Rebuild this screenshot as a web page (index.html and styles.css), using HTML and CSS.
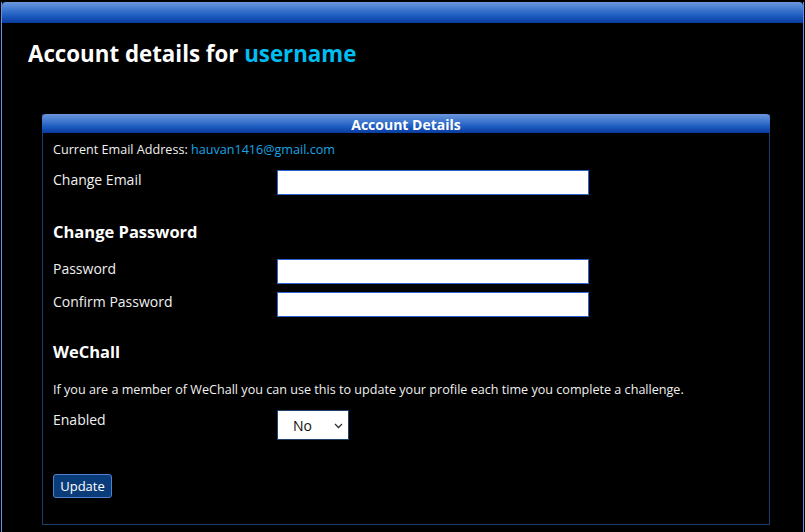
FILE: index.html
```html
<!DOCTYPE html>
<html lang="en">
<head>
<meta charset="utf-8">
<title>Account details</title>
<link rel="stylesheet" href="styles.css">
</head>
<body>
<div class="page">
  <div class="topbar"></div>
  <h1 class="title">Account details for <span class="user">username</span></h1>
  <form class="panel">
    <div class="panel-head">Account Details</div>
    <div class="panel-body">
      <p class="current">Current Email Address: <a class="email" href="#">hauvan1416@gmail.com</a></p>
      <div class="row row-email">
        <label class="label">Change Email</label>
        <input class="field" type="text">
      </div>
      <h2 class="section">Change Password</h2>
      <div class="row">
        <label class="label">Password</label>
        <input class="field" type="password">
      </div>
      <div class="row row-confirm">
        <label class="label">Confirm Password</label>
        <input class="field" type="password">
      </div>
      <h2 class="section section-wechall">WeChall</h2>
      <p class="note">If you are a member of WeChall you can use this to update your profile each time you complete a challenge.</p>
      <div class="row row-enabled">
        <label class="label">Enabled</label>
        <div class="select-wrap">
          <select class="select"><option>No</option><option>Yes</option></select>
          <svg class="chev" width="9" height="6" viewBox="0 0 9 6"><path d="M1 1 L4.5 4.5 L8 1" fill="none" stroke="#333" stroke-width="1.3"/></svg>
        </div>
      </div>
      <button class="btn" type="button">Update</button>
    </div>
  </form>
</div>
</body>
</html>
```
FILE: styles.css
```css
html, body {
  margin: 0;
  padding: 0;
  background: #000;
}
body {
  font-family: "Open Sans", "Noto Sans", sans-serif;
  color: #f0f0f0;
  background: #000;
}
.page {
  margin: 2px 1px 0 1px;
  border-left: 1px solid #6a90d8;
  border-right: 1px solid #6a90d8;
  min-height: 540px;
  box-sizing: border-box;
}
.topbar {
  height: 21px;
  border-radius: 4px 4px 0 0;
  background: linear-gradient(#6c98de 0%, #3a73cc 40%, #1a58be 70%, #0a3a9e 100%);
}
.title {
  margin: 16px 0 0 26px;
  font-size: 22.3px;
  font-weight: 700;
  line-height: 30px;
  color: #fff;
}
.user {
  color: #00bdf2;
}
.panel {
  margin: 45px 33px 0 40px;
  border: 1px solid #1b3c6e;
  border-top: none;
  height: 411px;
  box-sizing: border-box;
}
.panel-head {
  height: 19px;
  line-height: 21px;
  border-radius: 4px 4px 0 0;
  margin: 0 -1px;
  background: linear-gradient(#6a96dc 0%, #3d76cd 40%, #1a58be 70%, #0a3a9e 100%);
  color: #fff;
  font-weight: 700;
  font-size: 14px;
  text-align: center;
}
.panel-body {
  padding: 8px 10px 0 10px;
}
.current {
  margin: 0;
  font-size: 12.6px;
  line-height: 18px;
}
.email {
  color: #1aa6e4;
  text-decoration: none;
}
.row {
  display: flex;
  align-items: flex-start;
  margin-top: 16px;
}
.row-email {
  margin-top: 11px;
}
.row-confirm {
  margin-top: 8px;
}
.row-enabled {
  margin-top: 11px;
}
.label {
  width: 224px;
  flex: none;
  font-size: 14px;
  line-height: 19px;
}
.field {
  width: 312px;
  height: 25px;
  box-sizing: border-box;
  margin: 0;
  border: 1px solid #2d62d2;
  background: #fff;
  padding: 2px 4px;
  font-family: inherit;
}
.section {
  margin: 26px 0 0 0;
  font-size: 16.5px;
  font-weight: 700;
  line-height: 22px;
  color: #fff;
}
.section-wechall {
  margin-top: 24px;
}
.note {
  margin: 18px 0 0 0;
  font-size: 12.6px;
  line-height: 18px;
}
.select-wrap {
  position: relative;
  width: 72px;
  height: 30px;
}
.select {
  -webkit-appearance: none;
  appearance: none;
  width: 72px;
  height: 30px;
  box-sizing: border-box;
  margin: 0;
  border: 1px solid #21416f;
  border-radius: 0;
  background: #fff;
  color: #111;
  font-family: inherit;
  font-size: 14px;
  padding: 0 0 0 15px;
}
.chev {
  position: absolute;
  right: 6px;
  top: 13px;
  pointer-events: none;
}
.btn {
  display: block;
  margin-top: 34px;
  width: 59px;
  height: 24px;
  box-sizing: border-box;
  padding: 0;
  border: 1px solid #4f81cc;
  border-radius: 3px;
  background: #0b3c7a;
  color: #fff;
  font-family: inherit;
  font-size: 13px;
}
```
